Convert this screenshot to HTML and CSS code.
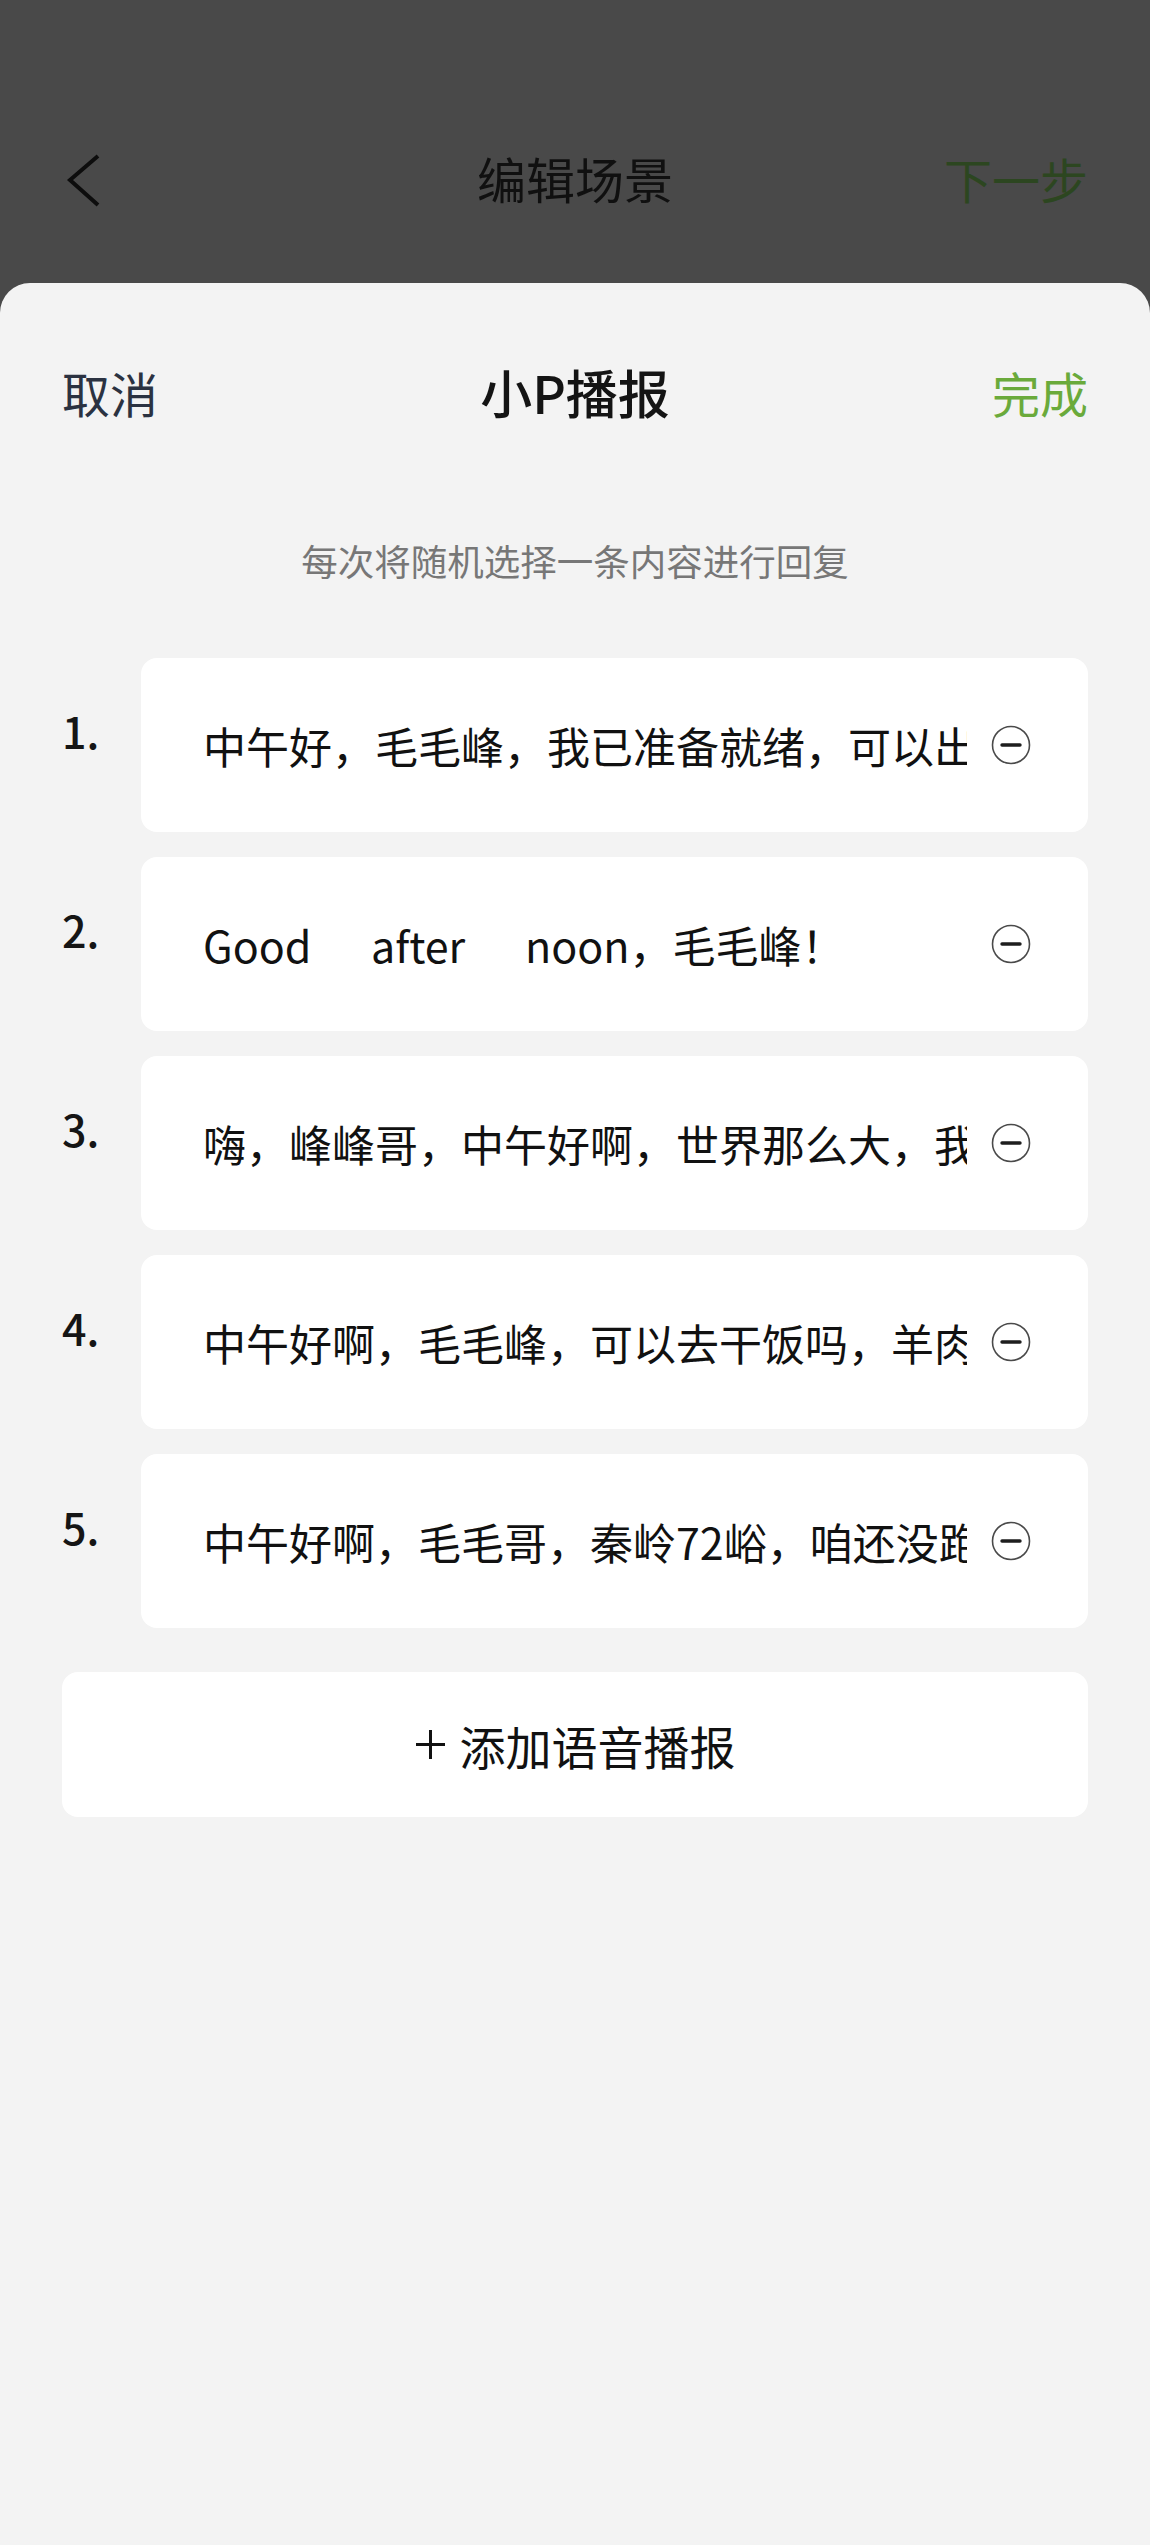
FILE: index.html
```html
<!DOCTYPE html>
<html lang="zh-CN">
<head>
    <meta charset="UTF-8">
    <meta name="viewport" content="width=device-width, initial-scale=1.0">
    <title>小P播报</title>
    <link rel="stylesheet" href="styles.css">
</head>
<body>
<div class="topbar">
    <svg class="back" width="36" height="56" viewBox="0 0 36 56">
        <polyline points="32,3 4,27 32,52" fill="none" stroke="#0d0d0d" stroke-width="4" stroke-linejoin="miter"/>
    </svg>
    <div class="topbar-title">编辑场景</div>
    <div class="topbar-next">下一步</div>
</div>

<div class="sheet">
    <div class="sheet-head">
        <span class="cancel">取消</span>
        <span class="sheet-title">小P播报</span>
        <span class="done">完成</span>
    </div>

    <p class="hint">每次将随机选择一条内容进行回复</p>

    <ol class="replies">
        <li class="reply">
            <span class="num">1.</span>
            <div class="card">
                <span class="text">中午好，毛毛峰，我已准备就绪，可以出发了吗？</span>
                <svg class="remove" width="40" height="40" viewBox="0 0 40 40"><circle cx="20" cy="20" r="18.5" fill="none" stroke="#4a4a4a" stroke-width="1.6"/><line x1="11" y1="20" x2="29" y2="20" stroke="#1e1e1e" stroke-width="3.4" stroke-linecap="round"/></svg>
            </div>
        </li>
        <li class="reply">
            <span class="num">2.</span>
            <div class="card">
                <span class="text spaced">Good after noon，毛毛峰！</span>
                <svg class="remove" width="40" height="40" viewBox="0 0 40 40"><circle cx="20" cy="20" r="18.5" fill="none" stroke="#4a4a4a" stroke-width="1.6"/><line x1="11" y1="20" x2="29" y2="20" stroke="#1e1e1e" stroke-width="3.4" stroke-linecap="round"/></svg>
            </div>
        </li>
        <li class="reply">
            <span class="num">3.</span>
            <div class="card">
                <span class="text">嗨，峰峰哥，中午好啊，世界那么大，我想去看看</span>
                <svg class="remove" width="40" height="40" viewBox="0 0 40 40"><circle cx="20" cy="20" r="18.5" fill="none" stroke="#4a4a4a" stroke-width="1.6"/><line x1="11" y1="20" x2="29" y2="20" stroke="#1e1e1e" stroke-width="3.4" stroke-linecap="round"/></svg>
            </div>
        </li>
        <li class="reply">
            <span class="num">4.</span>
            <div class="card">
                <span class="text">中午好啊，毛毛峰，可以去干饭吗，羊肉泡馍走起</span>
                <svg class="remove" width="40" height="40" viewBox="0 0 40 40"><circle cx="20" cy="20" r="18.5" fill="none" stroke="#4a4a4a" stroke-width="1.6"/><line x1="11" y1="20" x2="29" y2="20" stroke="#1e1e1e" stroke-width="3.4" stroke-linecap="round"/></svg>
            </div>
        </li>
        <li class="reply">
            <span class="num">5.</span>
            <div class="card">
                <span class="text">中午好啊，毛毛哥，秦岭72峪，咱还没跑完呢</span>
                <svg class="remove" width="40" height="40" viewBox="0 0 40 40"><circle cx="20" cy="20" r="18.5" fill="none" stroke="#4a4a4a" stroke-width="1.6"/><line x1="11" y1="20" x2="29" y2="20" stroke="#1e1e1e" stroke-width="3.4" stroke-linecap="round"/></svg>
            </div>
        </li>
    </ol>

    <button class="add" type="button">
        <svg class="plus" width="31" height="31" viewBox="0 0 31 31"><path d="M15.5 1v29M1 15.5h29" stroke="#111" stroke-width="3"/></svg>
        <span>添加语音播报</span>
    </button>
</div>
</body>
</html>
```

FILE: styles.css
```css
body {
    margin: 0;
    background: #494949;
    font-family: "Noto Sans CJK SC", "Noto Sans", sans-serif;
    color: #111;
}
.topbar {
    height: 283px;
    box-sizing: border-box;
    padding: 149px 62px 0;
    display: grid;
    grid-template-columns: 1fr auto 1fr;
    align-items: start;
}
.back {
    display: block;
    margin-top: 4px;
    margin-left: 4px;
}
.topbar-title {
    font-size: 49px;
    line-height: 58px;
    color: #101010;
}
.topbar-next {
    justify-self: end;
    font-size: 48px;
    line-height: 58px;
    color: #2c4620;
}
.sheet {
    background: #f3f3f3;
    border-radius: 30px 30px 0 0;
    min-height: calc(100vh - 283px);
    padding: 0 62px;
    overflow: hidden;
}
.sheet-head {
    display: grid;
    grid-template-columns: 1fr auto 1fr;
    align-items: center;
    padding-top: 79px;
    font-size: 48px;
    line-height: 60px;
}
.cancel {
    color: #2b3241;
}
.sheet-title {
    font-size: 52px;
    font-weight: 500;
    color: #141414;
}
.done {
    justify-self: end;
    color: #6aaa3b;
}
.hint {
    margin: 114px 0 0;
    text-align: center;
    font-size: 36.5px;
    line-height: 50px;
    color: #777;
}
.replies {
    list-style: none;
    margin: 72px 0 0;
    padding: 0;
    display: flex;
    flex-direction: column;
    gap: 25px;
}
.reply {
    display: flex;
    align-items: flex-start;
}
.num {
    width: 79px;
    flex-shrink: 0;
    padding-top: 50px;
    font-size: 43px;
    line-height: 44px;
    font-weight: 500;
    color: #151515;
}
.card {
    flex: 1;
    min-width: 0;
    height: 174px;
    box-sizing: border-box;
    background: #fff;
    border-radius: 16px;
    padding: 0 57px 0 62px;
    display: flex;
    align-items: center;
    gap: 24px;
}
.text {
    flex: 1;
    min-width: 0;
    white-space: nowrap;
    overflow: hidden;
    font-size: 43px;
    line-height: 60px;
    color: #111;
}
.spaced {
    word-spacing: 50px;
}
.remove {
    flex-shrink: 0;
    display: block;
}
.add {
    width: 100%;
    height: 145px;
    margin-top: 44px;
    border: none;
    border-radius: 16px;
    background: #fff;
    display: flex;
    align-items: center;
    justify-content: center;
    gap: 14px;
    font-family: inherit;
    font-size: 46px;
    color: #111;
}
.plus {
    display: block;
}
```
